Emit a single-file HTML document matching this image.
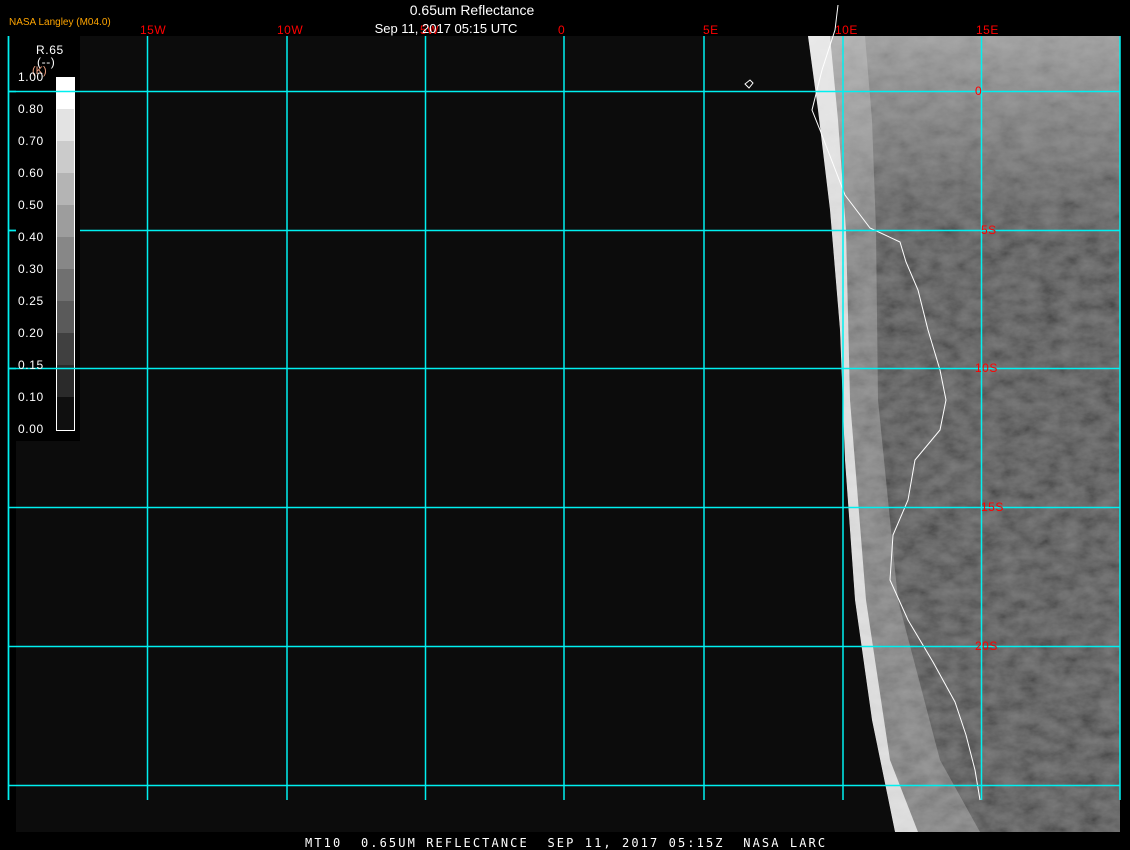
<!DOCTYPE html>
<html><head><meta charset="utf-8"><style>
html,body{margin:0;padding:0;background:#000;width:1130px;height:850px;overflow:hidden}
svg{display:block}
text{font-family:"Liberation Sans",sans-serif}
.m{font-family:"DejaVu Sans Mono","Liberation Mono",monospace;white-space:pre}
</style></head><body>
<svg width="1130" height="850" viewBox="0 0 1130 850" xmlns="http://www.w3.org/2000/svg">
<defs>
<filter id="n" x="0" y="0" width="100%" height="100%">
<feTurbulence type="fractalNoise" baseFrequency="0.05 0.08" numOctaves="4" seed="7"/>
<feColorMatrix type="matrix" values="0 0 0 1 0  0 0 0 1 0  0 0 0 1 0  0 0 0 0 1"/>
</filter>
<linearGradient id="top" x1="0" y1="0" x2="0" y2="1">
<stop offset="0" stop-color="#c8c8c8" stop-opacity="0.6"/><stop offset="0.15" stop-color="#aaa" stop-opacity="0.35"/><stop offset="0.28" stop-color="#777" stop-opacity="0"/>
</linearGradient>
<clipPath id="land"><polygon points="808,36 1120,36 1120,832 895,832 872,720 855,600 845,460 840,330 830,210 818,110"/></clipPath>
</defs>
<rect x="8" y="36" width="1112" height="796" fill="#0c0c0c"/>
<rect x="0" y="36" width="16" height="796" fill="#000"/>
<g clip-path="url(#land)">
<rect x="800" y="36" width="320" height="800" fill="#464646"/>
<rect x="800" y="36" width="320" height="800" filter="url(#n)" opacity="0.3"/>
<rect x="800" y="36" width="320" height="800" fill="url(#top)"/>
<polygon points="808,36 865,36 872,120 876,230 878,400 898,600 940,760 980,832 895,832 872,720 855,600 845,460 840,330 830,210 818,110" fill="#ddd" opacity="0.3"/>
<polygon points="808,36 830,36 838,120 846,230 850,400 866,600 890,760 918,832 895,832 872,720 855,600 845,460 840,330 830,210 818,110" fill="#fff" opacity="0.7"/>
</g>
<path d="M838,5 L835,30 L822,70 L812,110 L820,130 L845,195 L870,228 L900,242 L906,262 L918,290 L928,330 L940,370 L946,400 L940,430 L915,460 L908,500 L893,535 L890,580 L908,620 L933,662 L955,702 L966,735 L975,770 L980,800" fill="none" stroke="#fff" stroke-width="1"/>
<path d="M745,84 l5,-4 l3,3 l-4,5 z" fill="none" stroke="#fff" stroke-width="1"/>
<g stroke="#00f0f0" stroke-width="1.5">
<line x1="8.5" y1="36" x2="8.5" y2="800"/><line x1="147.5" y1="36" x2="147.5" y2="800"/><line x1="287" y1="36" x2="287" y2="800"/><line x1="425.5" y1="36" x2="425.5" y2="800"/><line x1="564" y1="36" x2="564" y2="800"/><line x1="704" y1="36" x2="704" y2="800"/><line x1="843" y1="36" x2="843" y2="800"/><line x1="981.5" y1="36" x2="981.5" y2="800"/><line x1="1120" y1="36" x2="1120" y2="800"/>
<line x1="8" y1="91.5" x2="1120" y2="91.5"/><line x1="8" y1="230.5" x2="1120" y2="230.5"/><line x1="8" y1="368.5" x2="1120" y2="368.5"/><line x1="8" y1="507.5" x2="1120" y2="507.5"/><line x1="8" y1="646.5" x2="1120" y2="646.5"/><line x1="8" y1="785.5" x2="1120" y2="785.5"/>
</g>
<g class="m" fill="#f00" font-size="12" letter-spacing="0.5">
<text x="140" y="34">15W</text><text x="277" y="34">10W</text><text x="420" y="34">5W</text><text x="558" y="34">0</text><text x="703" y="34">5E</text><text x="835" y="34">10E</text><text x="976" y="34">15E</text>
<text x="975" y="95">0</text><text x="981" y="234">5S</text><text x="975" y="372">10S</text><text x="981" y="511">15S</text><text x="975" y="650">20S</text>
</g>
<rect x="16" y="36" width="64" height="405" fill="#000"/>
<g>
<rect x="56" y="77" width="19" height="32" fill="#fff"/>
<rect x="56" y="109" width="19" height="32" fill="#e3e3e3"/>
<rect x="56" y="141" width="19" height="32" fill="#cbcbcb"/>
<rect x="56" y="173" width="19" height="32" fill="#b4b4b4"/>
<rect x="56" y="205" width="19" height="32" fill="#9d9d9d"/>
<rect x="56" y="237" width="19" height="32" fill="#878787"/>
<rect x="56" y="269" width="19" height="32" fill="#707070"/>
<rect x="56" y="301" width="19" height="32" fill="#5a5a5a"/>
<rect x="56" y="333" width="19" height="32" fill="#404040"/>
<rect x="56" y="365" width="19" height="32" fill="#2a2a2a"/>
<rect x="56" y="397" width="19" height="33" fill="#0f0f0f"/>
<rect x="56.5" y="77.5" width="18" height="353" fill="none" stroke="#fff" stroke-width="1"/>
</g>
<line x1="8" y1="91.5" x2="80" y2="91.5" stroke="#00f0f0" stroke-width="1.5"/>
<line x1="8" y1="230.5" x2="16" y2="230.5" stroke="#00f0f0" stroke-width="1.5"/>
<line x1="8" y1="368.5" x2="80" y2="368.5" stroke="#00f0f0" stroke-width="1.5"/>
<line x1="8.5" y1="36" x2="8.5" y2="800" stroke="#00f0f0" stroke-width="1.5"/>
<g class="m" fill="#fff" font-size="12" letter-spacing="0.6">
<text x="36" y="54">R.65</text><text x="37" y="66">(--)</text>
<text x="32" y="74" fill="#f0a080" font-size="11" letter-spacing="0">(K)</text>
<text x="18" y="81">1.00</text><text x="18" y="113">0.80</text><text x="18" y="145">0.70</text><text x="18" y="177">0.60</text><text x="18" y="209">0.50</text><text x="18" y="241">0.40</text><text x="18" y="273">0.30</text><text x="18" y="305">0.25</text><text x="18" y="337">0.20</text><text x="18" y="369">0.15</text><text x="18" y="401">0.10</text><text x="18" y="433">0.00</text>
</g>
<text x="9" y="25" fill="#ffa500" font-size="10">NASA Langley (M04.0)</text>
<text x="472" y="15" fill="#fff" font-size="14" text-anchor="middle">0.65um Reflectance</text>
<text x="446" y="33" fill="#fff" font-size="13" text-anchor="middle">Sep 11, 2017 05:15 UTC</text>
<text class="m" x="305" y="847" fill="#fff" font-size="12" letter-spacing="2.1" xml:space="preserve">MT10  0.65UM REFLECTANCE  SEP 11, 2017 05:15Z  NASA LARC</text>
</svg>
</body></html>
